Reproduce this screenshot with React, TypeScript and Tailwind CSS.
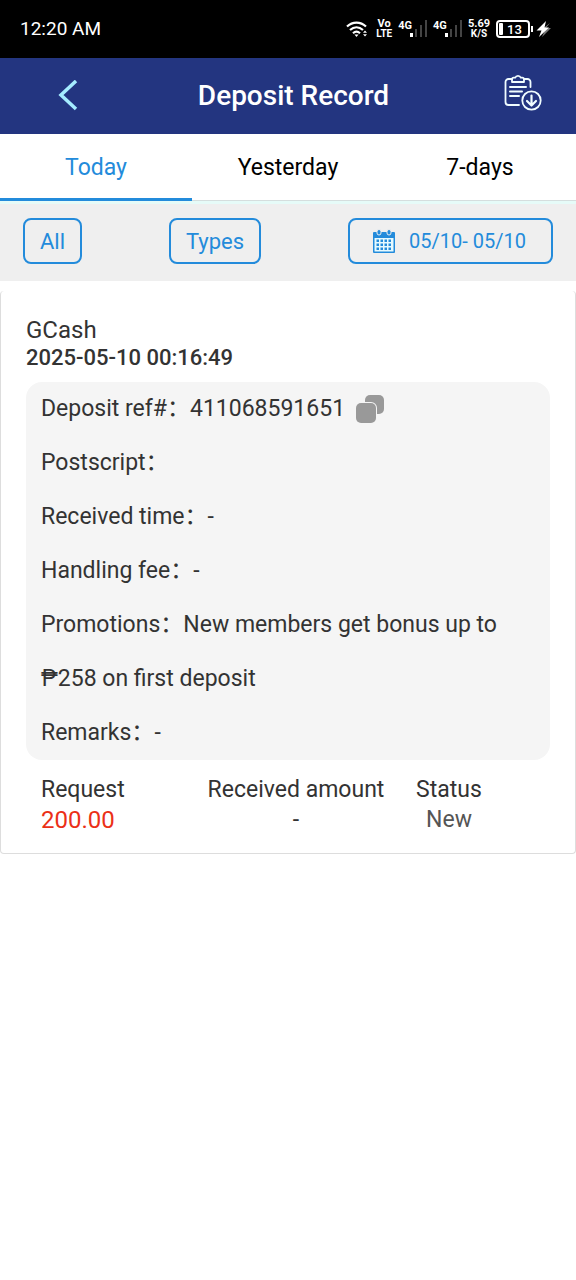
import type { ReactNode } from 'react';

type Detail = { label: string; value: string; copyable?: boolean };

const TABS = ['Today', 'Yesterday', '7-days'];

const DETAILS: Detail[] = [
  { label: 'Deposit ref#', value: '411068591651', copyable: true },
  { label: 'Postscript', value: '' },
  { label: 'Received time', value: '-' },
  { label: 'Handling fee', value: '-' },
  { label: 'Promotions', value: 'New members get bonus up to ₱258 on first deposit' },
  { label: 'Remarks', value: '-' },
];

function WifiIcon() {
  return (
    <svg width="22" height="18" viewBox="0 0 22 18" fill="none" stroke="white" strokeWidth="2.200" aria-hidden="true">
      <path d="M1 6.500C6.500 1.200 14.500 1.200 20 6.500" />
      <path d="M4 10C8 6.300 13 6.300 17 10" />
      <path d="M7 13.200C9.200 11.200 11.800 11.200 14 13.200" />
      <path d="M8.500 14.500h4l-2 2.500z" fill="white" stroke="none" />
      <path d="M17 12.700l2-2.200 2 2.200zM17 14.300l2 2.200 2-2.200z" fill="white" stroke="none" />
    </svg>
  );
}

function Signal() {
  return (
    <div className="flex items-start">
      <span className="text-[11px] leading-3 font-bold">4G</span>
      <svg width="17" height="18" viewBox="0 0 17 18" className="-ml-0.5" aria-hidden="true">
        <rect x="0" y="13" width="3" height="4" fill="#fff" />
        <rect x="5" y="9" width="2" height="8" fill="#444" />
        <rect x="10" y="5" width="2" height="12" fill="#444" />
        <rect x="15" y="0" width="2" height="17" fill="#444" />
      </svg>
    </div>
  );
}

function BatteryIcon() {
  return (
    <div className="flex items-center gap-px">
      <div className="flex h-[18px] w-[34px] items-center gap-1 rounded-sm border-2 border-white px-px">
        <span className="h-3 w-1 rounded-[1px] bg-white" />
        <span className="text-[13px] leading-none font-medium">13</span>
      </div>
      <span className="h-1.5 w-0.5 bg-white" />
      <svg width="16" height="18" viewBox="0 0 16 18" className="ml-0.5" aria-hidden="true">
        <path d="M14 3L5 10h4l-3 7 9-9h-5z" fill="#777" />
        <path d="M10 1L0.500 10.500h5l-2.500 6.500 10-9.500H8.500z" fill="#fff" />
      </svg>
    </div>
  );
}

function Stacked({ top, bottom }: { top: string; bottom: string }) {
  return (
    <div className="text-center font-bold">
      <div className="text-[11px] leading-[10px]">{top}</div>
      <div className="text-[10px] leading-[10px]">{bottom}</div>
    </div>
  );
}

function StatusBar() {
  return (
    <div className="flex h-[58px] items-center justify-between bg-black pr-6 pl-5 text-white">
      <span className="text-[19px]">12:20 AM</span>
      <div className="flex items-center gap-1.5">
        <WifiIcon />
        <div className="ml-0.5">
          <Stacked top="Vo" bottom="LTE" />
        </div>
        <Signal />
        <Signal />
        <Stacked top="5.69" bottom="K/S" />
        <BatteryIcon />
      </div>
    </div>
  );
}

function RecordIcon() {
  return (
    <svg
      width="38"
      height="38"
      viewBox="0 0 38 38"
      fill="none"
      stroke="#f0fdff"
      strokeWidth="1.800"
      strokeLinecap="round"
      strokeLinejoin="round"
      aria-hidden="true"
    >
      <path d="M8 6H4.500A3 3 0 0 0 1.500 9v20a3 3 0 0 0 3 3H15" />
      <path d="M20 6h3.500a3 3 0 0 1 3 3v5" />
      <path d="M8 9V6.500A1.800 1.800 0 0 1 9.800 4.700h1.400a3 3 0 0 1 5.600 0h1.400A1.800 1.800 0 0 1 20 6.500V9z" />
      <path d="M6 14h16M6 18.500h12M6 23h9" strokeWidth="2" />
      <circle cx="27.500" cy="27.500" r="9.200" />
      <path d="M27.500 22.500v9.500M23 28l4.500 4.500L32 28" strokeWidth="2.200" />
    </svg>
  );
}

function CalendarIcon() {
  return (
    <svg width="22" height="24" viewBox="0 0 22 24" aria-hidden="true">
      <path d="M1 3h20a1 1 0 0 1 1 1v19a1 1 0 0 1-1 1H1a1 1 0 0 1-1-1V4a1 1 0 0 1 1-1z" fill="#238bdb" />
      <path d="M1.500 9h19v13.500h-19z" fill="#e6faff" />
      <path
        d="M3.500 10.500h2.500v2.500h-2.500zM7.500 10.500h2.500v2.500h-2.500zM11.500 10.500h2.500v2.500h-2.500zM15.500 10.500h2.500v2.500h-2.500zM3.500 14.500h2.500v2.500h-2.500zM7.500 14.500h2.500v2.500h-2.500zM11.500 14.500h2.500v2.500h-2.500zM15.500 14.500h2.500v2.500h-2.500zM3.500 18.500h2.500v2.500h-2.500zM7.500 18.500h2.500v2.500h-2.500zM11.500 18.500h2.500v2.500h-2.500zM15.500 18.500h2.500v2.500h-2.500z"
        fill="#238bdb"
      />
      <rect x="4" y="0.500" width="4" height="5.500" rx="2" fill="#238bdb" stroke="#efefef" />
      <rect x="14" y="0.500" width="4" height="5.500" rx="2" fill="#238bdb" stroke="#efefef" />
    </svg>
  );
}

function CopyIcon() {
  return (
    <svg width="28" height="28" viewBox="0 0 28 28" fill="#999" aria-hidden="true">
      <rect x="9" y="0" width="19" height="19" rx="5" />
      <rect x="-1" y="7" width="22" height="22" rx="6" fill="#f5f5f5" />
      <rect x="0" y="8" width="20" height="20" rx="5" />
    </svg>
  );
}

function FilterButton({ children, className }: { children: ReactNode; className: string }) {
  return (
    <button
      type="button"
      className={`flex h-[46px] items-center justify-center rounded-lg border-2 border-[#238bdb] text-[#238bdb] ${className}`}
    >
      {children}
    </button>
  );
}

export default function App() {
  return (
    <div className="min-h-screen bg-white font-[Roboto,'Noto_Sans_CJK_SC',sans-serif] text-[#333]">
      <StatusBar />
      <header className="grid h-[76px] grid-cols-[136px_1fr_125px] items-center bg-[#233580] text-white">
        <button type="button" aria-label="Back" className="justify-self-center">
          <svg width="20" height="32" viewBox="0 0 20 32" fill="none" stroke="#a5ecff" strokeWidth="3.500" aria-hidden="true">
            <path d="M18 1L3 15l15 14" />
          </svg>
        </button>
        <h1 className="text-center text-[28px] font-medium">Deposit Record</h1>
        <button type="button" aria-label="Records" className="mr-[34px] mb-2 justify-self-end">
          <RecordIcon />
        </button>
      </header>

      <nav className="grid h-[67px] grid-cols-3 text-[23px]">
        {TABS.map((tab, i) => (
          <button
            key={tab}
            type="button"
            className={
              i === 0
                ? 'border-b-[3px] border-[#238bdb] pt-1 text-[#238bdb]'
                : 'border-b border-[#d5dede] pt-0.5 text-black'
            }
          >
            {tab}
          </button>
        ))}
      </nav>

      <div className="flex h-20 items-center justify-between border-t-[3px] border-[#e6fbf8] bg-[#efefef] px-[23px] pb-1">
        <FilterButton className="px-[15px] pt-0.5 text-[22px]">All</FilterButton>
        <FilterButton className="px-[15px] pt-0.5 text-[22px]">Types</FilterButton>
        <FilterButton className="w-[205px] gap-3.5 pr-0.5 text-xl">
          <CalendarIcon />
          <span>05/10- 05/10</span>
        </FilterButton>
      </div>

      <main className="pt-2.5">
        <article className="rounded-sm border border-t-0 border-[#ddd] px-[25px] pt-[25px] pb-[18px]">
          <h2 className="text-2xl leading-7">GCash</h2>
          <p className="text-[22px] leading-7 font-medium">2025-05-10 00:16:49</p>
          <dl className="mt-2.5 rounded-2xl bg-[#f5f5f5] px-[15px] text-[23px] leading-[54px]">
            {DETAILS.map((d) => (
              <div key={d.label}>
                <dt className="inline">{`${d.label}：`}</dt>
                <dd className="inline">
                  {d.value}
                  {d.copyable && (
                    <button type="button" aria-label="Copy" className="ml-[11px] inline-flex pb-0.5 align-middle">
                      <CopyIcon />
                    </button>
                  )}
                </dd>
              </div>
            ))}
          </dl>
          <table className="mt-[15px] w-full table-fixed text-center text-[23px] leading-[30px]">
            <thead>
              <tr>
                <th className="w-[166px] pl-[15px] text-left font-normal">Request</th>
                <th className="w-[208px] font-normal">Received amount</th>
                <th className="pr-[52px] font-normal">Status</th>
              </tr>
            </thead>
            <tbody>
              <tr>
                <td className="pl-[15px] text-left align-middle text-2xl leading-[30px] text-[#eb3017]">200.00</td>
                <td className="align-middle">-</td>
                <td className="pr-[52px] align-middle text-[#555]">New</td>
              </tr>
            </tbody>
          </table>
        </article>
      </main>
    </div>
  );
}
